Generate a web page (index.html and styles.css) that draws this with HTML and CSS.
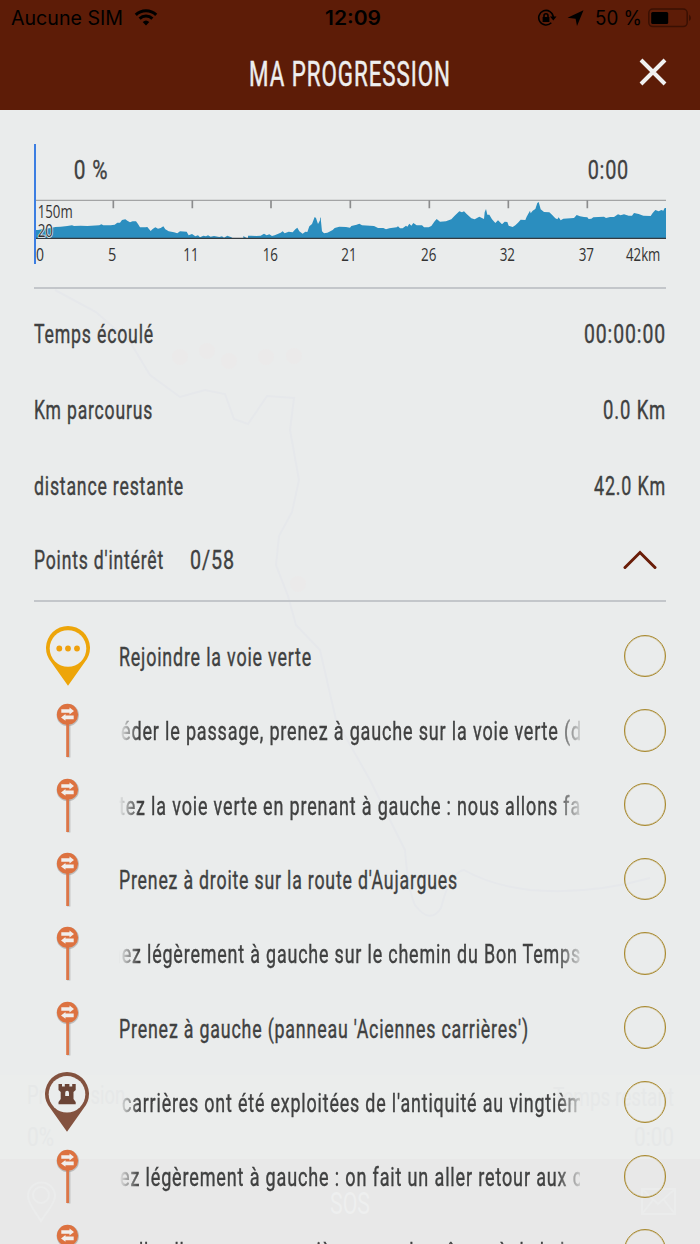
FILE: index.html
```html
<!DOCTYPE html>
<html lang="fr">
<head>
<meta charset="utf-8">
<title>Ma progression</title>
<link rel="stylesheet" href="styles.css">
</head>
<body>
<svg width="0" height="0" class="defs">
  <defs>
    <symbol id="sign" viewBox="0 0 48 74">
      <path d="M24.700 32V64.500" stroke="#9a9a9a" stroke-opacity=".5" stroke-width="3.400"/>
      <circle cx="23.800" cy="22.200" r="11.200" fill="#888" fill-opacity=".45"/>
      <path d="M23.600 30V64" stroke="#dc7648" stroke-width="2.800"/>
      <circle cx="23.500" cy="21.400" r="10.600" fill="#dd7240"/>
      <path d="M17.300 16.200H25.500V14.600L30 18L25.500 21.400V19.800H17.300zM29.700 22.600H21.500V21L17 24.400L21.500 27.800V26.200H29.700z" fill="#f1eeec"/>
    </symbol>
  </defs>
</svg>
<div class="screen">
  <svg class="map" viewBox="0 0 700 1244">
    <path class="band-mid" d="M0 1075H700V1159H0z"/>
    <path class="band-low" d="M0 1159H700V1244H0z"/>
    <path class="route" d="M55 290L96 312L130 342L150 375L180 397L205 390L225 394L234 419L248 424L267 396L294 398L290 430L299 480L292 512L279 536L276 565L288 596L296 625L320 650L336 720L370 780L405 850Q408 890 415 905Q430 925 441 908Q450 872 464 870Q490 885 530 890Q590 895 650 878"/>
    <g class="ghost">
      <circle cx="180" cy="357" r="8"/><circle cx="207" cy="351" r="8"/><circle cx="229" cy="361" r="8"/><circle cx="266" cy="357" r="8"/><circle cx="294" cy="356" r="8"/><circle cx="298" cy="584" r="8"/>
    </g>
    <g class="outline">
      <path d="M41 1221C35 1211 28 1204 28 1196A13.500 13.500 0 0 1 55 1196C55 1204 47 1211 41 1221z"/>
      <circle cx="41" cy="1195" r="8"/>
      <path d="M642 1189H675V1214H642zL658 1204L675 1189M642 1214L653 1200M675 1214L664 1200"/>
    </g>
    <text class="shade" x="27" y="1104" font-size="25" textLength="98" lengthAdjust="spacingAndGlyphs">Progression</text>
    <text class="shade" x="27" y="1146" font-size="25" textLength="27" lengthAdjust="spacingAndGlyphs">0%</text>
    <text class="shade" x="553" y="1106" font-size="25" textLength="121" lengthAdjust="spacingAndGlyphs">Temps restant</text>
    <text class="shade" x="634" y="1146" font-size="25" textLength="40" lengthAdjust="spacingAndGlyphs">0:00</text>
    <text class="light" x="330" y="1214" font-size="32" textLength="40" lengthAdjust="spacingAndGlyphs">SOS</text>
  </svg>

  <header class="header">
    <div class="status">
      <div class="carrier">
        <svg class="st" width="112" height="36"><text y="25" textLength="112" lengthAdjust="spacingAndGlyphs">Aucune SIM</text></svg>
        <svg width="24" height="18" viewBox="0 0 24 18">
          <path d="M12 16.500L8.700 13.100A4.800 4.800 0 0 1 15.300 13.100z"/>
          <path class="wave" d="M5.600 9.700A9.200 9.200 0 0 1 18.400 9.700M1.800 5.900A14.500 14.500 0 0 1 22.200 5.900"/>
        </svg>
      </div>
      <svg class="st clock" width="56" height="36"><text y="25" textLength="56" lengthAdjust="spacingAndGlyphs">12:09</text></svg>
      <div class="indicators">
        <svg width="20" height="18" viewBox="0 0 20 18">
          <path class="ring" d="M14.300 13.800A7.300 7.300 0 1 1 16.300 8"/>
          <path d="M13 7.500H19.500L16.300 11.500zM5.600 8H12.400V13H5.600z"/>
          <path class="ring" d="M7 8.500V6.700A2 2 0 0 1 11 6.700V8.500"/>
        </svg>
        <svg class="arrow" width="17" height="17" viewBox="0 0 17 17"><path d="M16.500 .3L10 16L8.600 8.800L.5 7.800z"/></svg>
        <svg class="st" width="47" height="36"><text y="25" textLength="47" lengthAdjust="spacingAndGlyphs">50 %</text></svg>
        <svg class="battery" width="44" height="20" viewBox="0 0 44 20">
          <rect class="case" x=".8" y="1" width="38.400" height="17.600" rx="4"/>
          <path class="cap" d="M41 6.500Q43 8 43 10Q43 12 41 13z"/>
          <rect x="3.200" y="4" width="17" height="12" rx="1.500"/>
        </svg>
      </div>
    </div>
    <div class="titlebar">
      <svg class="title" width="202" height="40"><text y="31" textLength="202" lengthAdjust="spacingAndGlyphs">MA PROGRESSION</text></svg>
      <svg class="close" width="28" height="28" viewBox="0 0 28 28"><path d="M2 2L26 26M26 2L2 26"/></svg>
    </div>
  </header>

  <main class="content">
    <section class="profile">
      <svg width="632" height="120" viewBox="0 0 1896 360">
        <path class="area" d="M4 283V258H12L24 256L50 252L64 249L80 248L100 246L114 244L120 246L140 245L160 246L196 244L202 241L208 244L230 244L242 242L250 236L258 236L264 228L274 226L280 230L288 235L296 232L306 232L312 240L318 250L334 250L340 249L350 261L356 255L364 250L372 254L380 252L388 247L394 256L404 262L420 265L430 268L438 262L458 263L464 274L474 270L484 277L492 274L498 280L508 275L516 277L522 274L530 278L540 276L556 279L564 277L570 281L580 275L592 280L596 283H628V276L634 280L640 283H642V275H652L666 276L680 275L690 269L698 274L706 271L714 276L722 274L740 266L746 262L752 268L764 263L776 265L784 256L790 251L796 262L806 269L814 263L820 264L826 247L834 240L842 219L846 222L852 240L858 229V220L860 222L864 262L870 268L880 266L886 263L896 258L902 252L916 248L936 249L948 251L952 246L968 242L976 239L984 244L1020 246L1032 252L1048 252L1056 256L1066 253L1088 250L1092 247L1098 253L1106 253L1116 245L1120 248L1126 239L1132 245L1138 237L1148 244L1164 244L1170 250L1184 250L1192 246L1202 232L1208 225L1218 233L1236 232L1252 226L1262 215L1276 202L1284 205L1290 202L1298 210L1312 223L1322 226L1336 218L1350 225L1352 205L1356 195L1360 212L1366 212L1374 226L1384 237L1392 229L1404 241L1412 233L1420 234L1424 245L1436 249L1444 244L1452 236L1460 227L1474 228L1478 218L1488 200L1490 208L1496 200L1504 195L1510 177L1514 174L1520 196L1530 204L1546 205L1554 212L1564 223L1570 226L1574 220L1580 229L1588 224L1620 222L1628 213L1638 217L1650 219L1660 220L1664 225L1672 224L1678 220L1710 218L1716 222L1728 219L1740 219L1752 211L1760 214L1770 211L1784 215L1794 215L1800 207L1814 210L1828 215L1850 216L1856 207L1864 198L1874 202L1882 198L1888 200L1892 192H1896V283z"/>
        <path class="top" d="M6 169H1896"/>
        <path class="ticks" d="M238 169V193M475 169V193M711 169V193M949 169V193M1186 169V193M1423 169V193M1660 169V193"/>
        <path class="base" d="M6 283H1896"/>
        <path class="cursor" d="M3 0V360"/>
        <g class="big">
          <text x="119" y="105" textLength="104" lengthAdjust="spacingAndGlyphs">0 %</text>
          <text x="1661" y="105" textLength="124" lengthAdjust="spacingAndGlyphs">0:00</text>
        </g>
        <g class="small">
          <text class="halo" x="11" y="223" textLength="105" lengthAdjust="spacingAndGlyphs">150m</text>
          <text class="halo" x="11" y="278" textLength="46" lengthAdjust="spacingAndGlyphs">20</text>
          <text x="6" y="350" textLength="24" lengthAdjust="spacingAndGlyphs">0</text>
          <text x="222" y="350" textLength="25" lengthAdjust="spacingAndGlyphs">5</text>
          <text x="448" y="350" textLength="46" lengthAdjust="spacingAndGlyphs">11</text>
          <text x="686" y="350" textLength="46" lengthAdjust="spacingAndGlyphs">16</text>
          <text x="922" y="350" textLength="46" lengthAdjust="spacingAndGlyphs">21</text>
          <text x="1161" y="350" textLength="46" lengthAdjust="spacingAndGlyphs">26</text>
          <text x="1397" y="350" textLength="46" lengthAdjust="spacingAndGlyphs">32</text>
          <text x="1634" y="350" textLength="46" lengthAdjust="spacingAndGlyphs">37</text>
          <text x="1776" y="350" textLength="103" lengthAdjust="spacingAndGlyphs">42km</text>
        </g>
      </svg>
    </section>

    <section class="stats">
      <div class="stat"><svg class="t" width="120" height="36"><text y="26.500" textLength="120" lengthAdjust="spacingAndGlyphs">Temps écoulé</text></svg><svg class="t" width="82" height="36"><text y="26.500" textLength="82" lengthAdjust="spacingAndGlyphs">00:00:00</text></svg></div>
      <div class="stat"><svg class="t" width="119" height="36"><text y="26.500" textLength="119" lengthAdjust="spacingAndGlyphs">Km parcourus</text></svg><svg class="t" width="63" height="36"><text y="26.500" textLength="63" lengthAdjust="spacingAndGlyphs">0.0 Km</text></svg></div>
      <div class="stat"><svg class="t" width="150" height="36"><text y="26.500" textLength="150" lengthAdjust="spacingAndGlyphs">distance restante</text></svg><svg class="t" width="72" height="36"><text y="26.500" textLength="72" lengthAdjust="spacingAndGlyphs">42.0 Km</text></svg></div>
      <div class="stat poi">
        <div class="poi-label"><svg class="t" width="130" height="36"><text y="26.700" textLength="130" lengthAdjust="spacingAndGlyphs">Points d'intérêt</text></svg><svg class="t" width="45" height="36"><text y="26.700" textLength="45" lengthAdjust="spacingAndGlyphs">0/58</text></svg></div>
        <svg class="chevron" width="34" height="20" viewBox="0 0 34 20"><path d="M2 17.500L17 2.500L32 17.500"/></svg>
      </div>
    </section>

    <ul class="list">
      <li class="row">
        <svg class="icon" viewBox="0 0 48 74">
          <path d="M24 66.700L7.500 43.500A22 22 0 1 1 40.500 43.500z" fill="#eda509"/>
          <circle cx="24" cy="29.500" r="18.300" fill="#eaecec"/>
          <g fill="#efa00c"><circle cx="15.300" cy="29.500" r="2.900"/><circle cx="24" cy="29.500" r="2.900"/><circle cx="33" cy="29.500" r="2.900"/></g>
        </svg>
        <div class="label"><svg class="t" width="461" height="36"><text y="27.800" textLength="193" lengthAdjust="spacingAndGlyphs">Rejoindre la voie verte</text></svg></div>
        <span class="check"></span>
      </li>
      <li class="row">
        <svg class="icon"><use href="#sign"/></svg>
        <div class="label fade"><svg class="t" width="461" height="36"><text x="2" y="27.800" textLength="461" lengthAdjust="spacingAndGlyphs">éder le passage, prenez à gauche sur la voie verte (d</text></svg></div>
        <span class="check"></span>
      </li>
      <li class="row">
        <svg class="icon"><use href="#sign"/></svg>
        <div class="label fade"><svg class="t" width="461" height="36"><text y="27.800" textLength="462" lengthAdjust="spacingAndGlyphs">tez la voie verte en prenant à gauche : nous allons fa</text></svg></div>
        <span class="check"></span>
      </li>
      <li class="row">
        <svg class="icon"><use href="#sign"/></svg>
        <div class="label"><svg class="t" width="461" height="36"><text y="27.800" textLength="339" lengthAdjust="spacingAndGlyphs">Prenez à droite sur la route d'Aujargues</text></svg></div>
        <span class="check"></span>
      </li>
      <li class="row">
        <svg class="icon"><use href="#sign"/></svg>
        <div class="label fade"><svg class="t" width="461" height="36"><text x="-8" y="27.800" textLength="470" lengthAdjust="spacingAndGlyphs">nez légèrement à gauche sur le chemin du Bon Temps</text></svg></div>
        <span class="check"></span>
      </li>
      <li class="row">
        <svg class="icon"><use href="#sign"/></svg>
        <div class="label"><svg class="t" width="461" height="36"><text y="27.800" textLength="410" lengthAdjust="spacingAndGlyphs">Prenez à gauche (panneau 'Aciennes carrières')</text></svg></div>
        <span class="check"></span>
      </li>
      <li class="row">
        <svg class="icon" viewBox="0 0 48 74">
          <path d="M23 66.700L6.500 43.500A22 22 0 1 1 39.500 43.500z" fill="#83523f"/>
          <circle cx="23" cy="29.300" r="18.300" fill="#eaecec"/>
          <path d="M14.500 19H18V21.500H20.800V19H25.400V21.500H28.200V19H31.700V25L29.500 27V34L31.700 37V39.300H14.500V37L16.700 34V27L14.500 25z" fill="#6b4436"/>
          <path d="M21.200 31V28A1.900 2.200 0 0 1 25 28V31z" fill="#eaecec"/>
        </svg>
        <div class="label fade"><svg class="t" width="461" height="36"><text x="3" y="27.800" textLength="462" lengthAdjust="spacingAndGlyphs">carrières ont été exploitées de l'antiquité au vingtièm</text></svg></div>
        <span class="check"></span>
      </li>
      <li class="row">
        <svg class="icon"><use href="#sign"/></svg>
        <div class="label fade"><svg class="t" width="461" height="36"><text x="1" y="27.800" textLength="463" lengthAdjust="spacingAndGlyphs">ez légèrement à gauche : on fait un aller retour aux c</text></svg></div>
        <span class="check"></span>
      </li>
      <li class="row">
        <svg class="icon"><use href="#sign"/></svg>
        <div class="label fade"><svg class="t" width="461" height="36"><text y="27.500" textLength="462" lengthAdjust="spacingAndGlyphs">celle elle nous une carrière passe la même où de la ha</text></svg></div>
        <span class="check"></span>
      </li>
    </ul>
  </main>
</div>
</body>
</html>
```

FILE: styles.css
```css
* { box-sizing: border-box; }
body { margin: 0; background: #eaecec; font-family: Roboto, "Liberation Sans", sans-serif; }
svg { display: block; flex: none; }
.defs { position: absolute; }
.screen { position: relative; width: 700px; height: 1244px; overflow: hidden; display: flex; flex-direction: column; }

/* faded map and toolbar showing through the panel */
.map { position: absolute; inset: 0; width: 700px; height: 1244px; }
.band-mid { fill: #ebedec; }
.band-low { fill: #e8e8e8; }
.route { fill: none; stroke: #e6e8eb; stroke-width: 2; }
.ghost { fill: #ebeaea; }
.outline { fill: none; stroke: #ebecec; stroke-width: 2; }
.shade { fill: #e6e8e8; }
.light { fill: #eeefef; }

.header { position: relative; height: 110px; background: #5d1c07; }
.status { height: 36px; padding: 0 8px 0 11px; display: grid; grid-template-columns: 314px 56px 1fr; }
.st { overflow: visible; font-family: Inter, sans-serif; font-size: 19.500px; }
.clock { font-weight: 600; }
.carrier { display: flex; align-items: center; gap: 11px; }
.wave { fill: none; stroke: #000; stroke-width: 3; }
.indicators { display: flex; justify-content: flex-end; align-items: center; }
.ring { fill: none; stroke: #000; stroke-width: 1.600; }
.arrow { margin: 0 11px 0 10px; }
.battery { margin-left: 6px; }
.case { fill: none; stroke: #3a1003; stroke-width: 1.500; }
.cap { fill: #3a1003; }
.titlebar { height: 74px; padding: 19px 33px 0 249px; display: flex; justify-content: space-between; }
.title { overflow: visible; fill: #eeeeee; stroke: #eeeeee; stroke-width: .5; font-size: 35.500px; letter-spacing: 1.500px; }
.close { margin-top: 3px; stroke: #f0f0f0; stroke-width: 4; }

.content { position: relative; padding: 34px 34px 0; }
.profile { height: 145px; border-bottom: 2px solid #c3c6ca; }
.area { fill: #2b8ebf; }
.top { stroke: #a3a4a5; stroke-width: 4; }
.ticks { stroke: #8b8c8d; stroke-width: 5; }
.base { stroke: #343b40; stroke-width: 4; }
.cursor { stroke: #3c7ee2; stroke-width: 6; }
.big { font-size: 78px; fill: #404141; stroke: #404141; stroke-width: 1; letter-spacing: 3px; }
.small { font-family: "Open Sans", sans-serif; font-size: 57px; fill: #333; }
.halo { stroke: #eaecec; stroke-width: 5; paint-order: stroke; }

.stats { height: 313px; padding-top: 27px; border-bottom: 2px solid #c3c6ca; }
.stat { height: 76px; display: flex; justify-content: space-between; align-items: flex-start; }
.t { overflow: visible; font-size: 26px; fill: #404141; stroke: #404141; stroke-width: .4; letter-spacing: 1.200px; }
.poi { margin-top: -2px; }
.poi-label { display: flex; gap: 26px; }
.chevron { margin: 8px 9px 0 0; fill: none; stroke: #6a1d08; stroke-width: 3; stroke-linecap: round; }

.list { list-style: none; margin: 0; padding: 16.800px 0 0; }
.row { height: 74.350px; display: flex; align-items: center; }
.icon { width: 48px; height: 74px; margin: 0 27px 0 10px; }
.label { width: 461px; margin-right: 43.500px; overflow: hidden; }
.fade { -webkit-mask-image: linear-gradient(90deg, transparent, #000 20px, #000 438px, transparent 466px); mask-image: linear-gradient(90deg, transparent, #000 20px, #000 438px, transparent 466px); }
.check { width: 42.500px; height: 42.500px; border: 1px solid #a98a30; border-radius: 50%; box-shadow: inset 0 0 0 .5px #b0923d80; }
```
